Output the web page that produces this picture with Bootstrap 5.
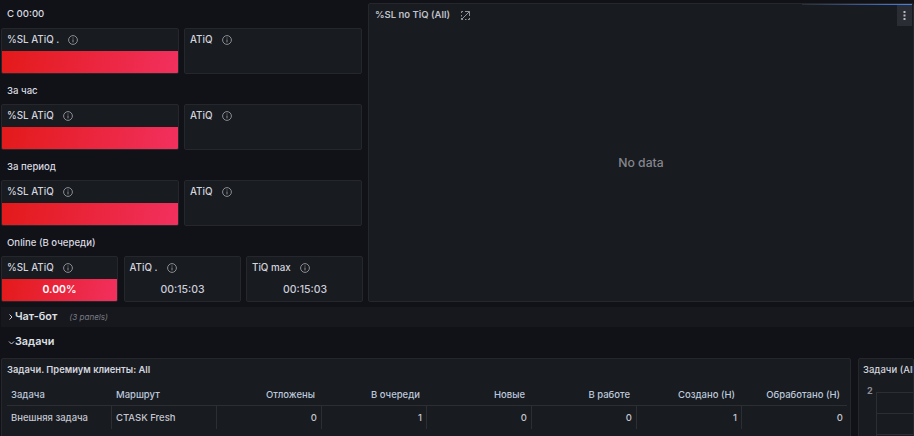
<!DOCTYPE html>
<html lang="ru">
<head>
<meta charset="utf-8">
<title>Dashboard</title>
<link href="https://cdn.jsdelivr.net/npm/bootstrap@5.3.0/dist/css/bootstrap.min.css" rel="stylesheet">
<style>
html,body{height:436px;overflow:hidden;background:#111217;}
body{font-family:Inter,"Noto Sans",sans-serif;color:#ccccdc;font-size:10px;width:914px;}
.dash-top{display:flex;gap:5px;padding:3px 0 0 1px;height:307px;align-items:flex-start;}
.dash-left{width:362px;flex:none;display:flex;flex-direction:column;}
.sect-label{height:25px;padding:0 0 0 6px;line-height:22px;font-size:9.6px;font-weight:500;color:#d8d9e0;flex:none;}
.dash-row{display:flex;gap:5px;height:46px;flex:none;width:361px;}
.dash-row+.sect-label{height:30px;padding-top:6px;line-height:22px;}
.dash-row.triple{gap:5.5px;width:362px;}
.pane{background:#181b1f;border:1px solid #25272d;border-radius:2px;flex:1 1 0;min-width:0;display:flex;flex-direction:column;overflow:hidden;}
.pane-head{height:22px;flex:none;display:flex;align-items:center;padding:0 5px;font-size:9.8px;font-weight:500;color:#d3d5df;white-space:nowrap;}
.pane-head svg{margin-left:8px;flex:none;}
.red-bar{flex:1;background:linear-gradient(100deg,#e31a1a 0%,#f2305e 100%);display:flex;align-items:center;justify-content:center;color:#fff;font-weight:600;font-size:10.5px;}
.time-val{flex:1;display:flex;align-items:center;justify-content:center;padding-left:1px;font-size:10.5px;font-weight:500;color:#ccccdc;}
.pane-nodata{width:546px;height:299px;flex:none;position:relative;background:#181b1f;border:1px solid #25272d;border-radius:2px;display:flex;flex-direction:column;}
.pane-nodata .pane-head{height:22px;padding-left:6px;}
.pane-nodata .pane-head svg{margin-left:10px;}
.pane-nodata .pane-head span{font-weight:600;font-size:9.5px;color:#bfc1cc;}
.nodata-body{flex:1;display:flex;align-items:center;justify-content:center;font-size:12.2px;font-weight:500;color:#85868e;padding-bottom:1px;padding-right:0;}
.top-glow{position:absolute;top:0;right:1px;width:110px;height:1px;background:linear-gradient(90deg,#2a2d33,#4a80e8);}
.menu-dots{position:absolute;top:1px;right:1px;width:15px;height:21px;background:#2a2d33;display:flex;align-items:center;justify-content:center;}
.collapse-row{height:20px;margin:0 0 0 1px;background:#16181d;display:flex;align-items:center;padding-left:7px;font-size:10.8px;font-weight:600;color:#dfe0e6;}
.collapse-row em{font-weight:400;font-size:8.1px;color:#7a7b84;margin-left:12px;}
.chev{width:7px;flex:none;display:flex;}
.open-row{height:31px;display:flex;align-items:center;padding:0 0 0 8px;font-size:10.8px;font-weight:600;color:#dfe0e6;background:#111217;}
.dash-bottom{display:flex;gap:7px;padding-left:1px;height:90px;}
.task-pane{width:850px;flex:none;background:#181b1f;border:1px solid #25272d;border-radius:2px;padding:0 5px;}
.task-title{height:22px;line-height:22px;font-size:9.4px;font-weight:600;color:#d3d5df;margin-bottom:3px;}
.task-grid{display:grid;grid-template-columns:105px repeat(7,105px);width:840px;}
.cell-h{height:22px;line-height:22px;padding:0 4px;font-size:9.5px;font-weight:500;color:#bcc8dc;border-bottom:1px solid #2c2e34;white-space:nowrap;}
.cell-h.num{padding-right:7px;}
.cell-d{height:23px;line-height:23px;padding:0 4px;font-size:9.5px;font-weight:500;color:#c4c5cf;border-right:1px solid #2c2e34;white-space:nowrap;}
.cell-d:last-child{border-right:0;}
.num{text-align:right;}
.graph-pane{flex:1;background:#181b1f;border:1px solid #25272d;border-radius:2px;padding:0 0 0 4px;overflow:hidden;}
.graph-title{height:22px;line-height:22px;font-size:9.5px;font-weight:500;color:#d3d5df;white-space:nowrap;}
.graph-box{display:flex;gap:3px;padding-left:4px;}
.axis-val{font-size:9px;font-weight:700;color:#8e8f98;line-height:10px;margin-top:5px;}
.graph-lines{flex:1;height:50px;margin-top:11px;border-top:1px solid #2c2e34;border-left:1px solid #2c2e34;}
.graph-lines div{height:21px;border-bottom:1px solid #2c2e34;}
</style>
</head>
<body>
<svg width="0" height="0" class="d-block">
<defs>
<symbol id="info-ic" viewBox="0 0 12 12">
<circle cx="6" cy="6" r="4.4" fill="none" stroke="#8b8d96" stroke-width="1"/>
<rect x="5.5" y="5.4" width="1" height="3" fill="#8b8d96"/>
<rect x="5.5" y="3.5" width="1" height="1" fill="#8b8d96"/>
</symbol>
</defs>
</svg>
<div class="dash-top">
  <div class="dash-left">
    <div class="sect-label">С 00:00</div>
    <div class="dash-row">
      <div class="pane"><div class="pane-head">%SL ATiQ .<svg width="12" height="12"><use href="#info-ic"/></svg></div><div class="red-bar"></div></div>
      <div class="pane"><div class="pane-head">ATiQ<svg width="12" height="12"><use href="#info-ic"/></svg></div></div>
    </div>
    <div class="sect-label">За час</div>
    <div class="dash-row">
      <div class="pane"><div class="pane-head">%SL ATiQ<svg width="12" height="12"><use href="#info-ic"/></svg></div><div class="red-bar"></div></div>
      <div class="pane"><div class="pane-head">ATiQ<svg width="12" height="12"><use href="#info-ic"/></svg></div></div>
    </div>
    <div class="sect-label">За период</div>
    <div class="dash-row">
      <div class="pane"><div class="pane-head">%SL ATiQ<svg width="12" height="12"><use href="#info-ic"/></svg></div><div class="red-bar"></div></div>
      <div class="pane"><div class="pane-head">ATiQ<svg width="12" height="12"><use href="#info-ic"/></svg></div></div>
    </div>
    <div class="sect-label">Online (В очереди)</div>
    <div class="dash-row triple">
      <div class="pane"><div class="pane-head">%SL ATiQ<svg width="12" height="12"><use href="#info-ic"/></svg></div><div class="red-bar">0.00%</div></div>
      <div class="pane"><div class="pane-head">ATiQ .<svg width="12" height="12"><use href="#info-ic"/></svg></div><div class="time-val">00:15:03</div></div>
      <div class="pane"><div class="pane-head">TiQ max<svg width="12" height="12"><use href="#info-ic"/></svg></div><div class="time-val">00:15:03</div></div>
    </div>
  </div>
  <div class="pane-nodata">
    <div class="top-glow"></div>
    <div class="menu-dots"><svg width="3" height="9" viewBox="0 0 3 9"><rect x="0.5" y="0" width="2" height="2" fill="#b9bac2"/><rect x="0.5" y="3.5" width="2" height="2" fill="#b9bac2"/><rect x="0.5" y="7" width="2" height="2" fill="#b9bac2"/></svg></div>
    <div class="pane-head"><span>%SL no TiQ (All)</span><svg width="11" height="11" viewBox="0 0 11 11" fill="none" stroke="#8f919a" stroke-width="1"><path d="M3 1.5H1.5V3M1.5 5v1.5M1.5 8v1.5H3M5 9.5h1.5M8 9.5h1.5V8M9.5 6V1.5H5M1.5 9.5l8-8"/></svg></div>
    <div class="nodata-body">No data</div>
  </div>
</div>
<div class="collapse-row"><span class="chev"><svg width="6" height="8" viewBox="0 0 6 8" fill="none" stroke="#c8c9d2" stroke-width="1"><path d="M1.5 1.5 4 4 1.5 6.5"/></svg></span>Чат-бот<em>(3 panels)</em></div>
<div class="open-row"><span class="chev"><svg width="7" height="6" viewBox="0 0 7 6" fill="none" stroke="#c8c9d2" stroke-width="1"><path d="M1 1.5 3.5 4 6 1.5"/></svg></span>Задачи</div>
<div class="dash-bottom">
  <div class="task-pane">
    <div class="task-title">Задачи. Премиум клиенты: All</div>
    <div class="task-grid">
      <div class="cell-h">Задача</div><div class="cell-h">Маршрут</div><div class="cell-h num">Отложены</div><div class="cell-h num">В очереди</div><div class="cell-h num">Новые</div><div class="cell-h num">В работе</div><div class="cell-h num">Создано (Н)</div><div class="cell-h num">Обработано (Н)</div>
      <div class="cell-d">Внешняя задача</div><div class="cell-d">CTASK Fresh</div><div class="cell-d num">0</div><div class="cell-d num">1</div><div class="cell-d num">0</div><div class="cell-d num">0</div><div class="cell-d num">1</div><div class="cell-d num">0</div>
    </div>
  </div>
  <div class="graph-pane">
    <div class="graph-title">Задачи (All)</div>
    <div class="graph-box"><div class="axis-val">2</div><div class="graph-lines"><div></div><div></div></div></div>
  </div>
</div>
<script src="https://cdn.jsdelivr.net/npm/bootstrap@5.3.0/dist/js/bootstrap.bundle.min.js"></script>
</body>
</html>
